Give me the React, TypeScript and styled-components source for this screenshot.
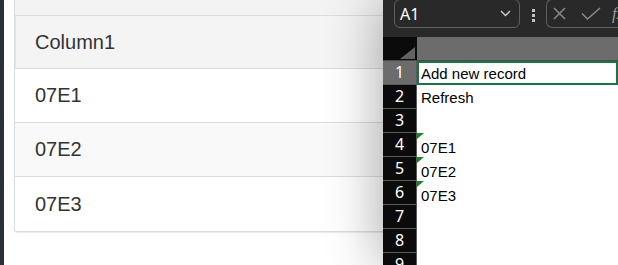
import * as React from "react";
import styled, { createGlobalStyle } from "styled-components";

const GlobalStyle = createGlobalStyle`
  body {
    margin: 0;
    overflow: hidden;
    background: #fff;
  }
`;

const tableRows = ["07E1", "07E2", "07E3"];

const sheetRows: { value: string; flagged?: boolean }[] = [
  { value: "Add new record" },
  { value: "Refresh" },
  { value: "" },
  { value: "07E1", flagged: true },
  { value: "07E2", flagged: true },
  { value: "07E3", flagged: true },
  { value: "" },
  { value: "" },
  { value: "" },
];

const Screen = styled.div`
  display: flex;
  width: 618px;
  height: 265px;
  overflow: hidden;
  background: #fff;
`;

const SideStrip = styled.div`
  width: 4px;
  flex-shrink: 0;
  background: #2a2e35;
`;

const BrowserArea = styled.main`
  flex: 1;
  min-width: 0;
  padding-left: 10px;
  overflow: hidden;
`;

const Card = styled.section`
  border: 1px solid #dcdcdc;
  border-top: none;
  border-right: none;
  border-radius: 0 0 0 3px;
  box-shadow: 0 1px 1px rgba(0, 0, 0, 0.08);
  overflow: hidden;
`;

const CardTop = styled.div`
  height: 15px;
  background: #f3f3f3;
  border-bottom: 1px solid #dcdcdc;
`;

const TableRow = styled.div<{ $variant: "head" | "odd" | "even"; $last?: boolean }>`
  display: flex;
  align-items: center;
  box-sizing: border-box;
  height: ${(p) => (p.$variant === "head" ? 53 : 54)}px;
  padding-left: ${(p) => (p.$variant === "head" ? 19 : 20)}px;
  border-bottom: ${(p) => (p.$last ? "none" : "1px solid #dcdcdc")};
  border-left: ${(p) => (p.$variant === "head" ? "1px solid #e4e4e4" : "none")};
  background: ${(p) =>
    p.$variant === "head" ? "#f4f4f4" : p.$variant === "even" ? "#f9f9f9" : "#fff"};
  font-family: "Liberation Sans", Arial, sans-serif;
  font-size: 20px;
  color: #333;
`;

const ExcelPane = styled.aside`
  position: relative;
  z-index: 1;
  width: 235px;
  flex-shrink: 0;
  background: #292929;
  box-shadow: -4px 0 50px rgba(0, 0, 0, 0.32);
  display: flex;
  flex-direction: column;
  overflow: hidden;
`;

const Toolbar = styled.div`
  display: flex;
  align-items: flex-start;
  flex-shrink: 0;
  height: 37px;
  padding-left: 11px;
`;

const NameBox = styled.div`
  box-sizing: border-box;
  width: 126px;
  flex-shrink: 0;
  height: 29px;
  margin-top: -1px;
  border: 1px solid #5e5e5e;
  border-radius: 6px;
  display: flex;
  align-items: center;
  justify-content: space-between;
  padding: 0 8px 0 5px;
  color: #fff;
  font-family: "Noto Sans", sans-serif;
  font-size: 16px;
`;

const Dots = styled.div`
  display: flex;
  flex-direction: column;
  flex-shrink: 0;
  gap: 2px;
  margin: 9px 0 0 12px;

  span {
    display: block;
    width: 3px;
    height: 3px;
    background: #c4c4c4;
  }
`;

const FormulaBox = styled.div`
  box-sizing: border-box;
  flex: 1;
  min-width: 0;
  height: 29px;
  margin: -1px 0 0 11px;
  border: 1px solid #5e5e5e;
  border-right: none;
  border-radius: 6px 0 0 6px;
  display: flex;
  align-items: center;
  padding-left: 6px;
  overflow: hidden;

  svg {
    flex-shrink: 0;
  }
`;

const IconGap = styled.span<{ $size: number }>`
  flex-shrink: 0;
  width: ${(p) => p.$size}px;
`;

const FxLabel = styled.span`
  flex-shrink: 0;
  color: #9a9a9a;
  font-family: "Liberation Serif", serif;
  font-style: italic;
  font-size: 17px;
`;

const Grid = styled.div`
  display: flex;
  flex-direction: column;
`;

const GridRow = styled.div`
  display: flex;
  height: 24px;
  flex-shrink: 0;
`;

const Corner = styled.div`
  box-sizing: border-box;
  width: 34px;
  background: #0b0b0b;
  border-bottom: 1px solid #4a4a4a;
  display: flex;
  align-items: flex-end;
  justify-content: flex-end;
  padding: 0 2px 1px 0;
`;

const ColHeader = styled.div`
  flex: 1;
  background: #6c6c6c;
  border-bottom: 1px solid #4a4a4a;
`;

const RowHeader = styled.div<{ $active?: boolean }>`
  box-sizing: border-box;
  width: 34px;
  flex-shrink: 0;
  background: ${(p) => (p.$active ? "#6c6c6c" : "#0b0b0b")};
  border-bottom: 1px solid #5a5a5a;
  border-right: 1px solid #5a5a5a;
  color: #fff;
  font-family: "Noto Sans", sans-serif;
  font-size: 16px;
  line-height: 23px;
  text-align: center;
`;

const Cell = styled.div<{ $selected?: boolean; $flagged?: boolean }>`
  position: relative;
  flex: 1;
  box-sizing: border-box;
  display: flex;
  align-items: center;
  padding: ${(p) => (p.$flagged ? "4px" : "1px")} 0 0 4px;
  background: #fff;
  box-shadow: ${(p) => (p.$selected ? "inset 0 0 0 2px #1e7145" : "none")};
  color: #000;
  font-family: "Liberation Sans", Arial, sans-serif;
  font-size: 15px;
  white-space: nowrap;

  &::before {
    content: "";
    display: ${(p) => (p.$flagged ? "block" : "none")};
    position: absolute;
    top: 0;
    left: 0;
    border-style: solid;
    border-width: 6px 7px 0 0;
    border-color: #178a1c transparent transparent transparent;
  }
`;

const Chevron = () => (
  <svg width="11" height="7" viewBox="0 0 11 7" fill="none">
    <path d="M1 1l4.5 4.5L10 1" stroke="#cfcfcf" strokeWidth="1.4" />
  </svg>
);

const CrossIcon = () => (
  <svg width="13" height="13" viewBox="0 0 13 13" fill="none">
    <path d="M1 1l11 11M12 1L1 12" stroke="#8a8a8a" strokeWidth="1.5" />
  </svg>
);

const CheckIcon = () => (
  <svg width="20" height="13" viewBox="0 0 20 13" fill="none">
    <path d="M1 6.5l5.5 5.5L19 1" stroke="#8a8a8a" strokeWidth="1.5" />
  </svg>
);

const CornerTriangle = () => (
  <svg width="15" height="12" viewBox="0 0 15 12">
    <polygon points="15,0 15,12 0,12" fill="#626262" />
  </svg>
);

const App = () => {
  return (
    <>
      <GlobalStyle />
      <Screen>
        <SideStrip />
        <BrowserArea>
          <Card>
            <CardTop />
            <TableRow $variant="head">Column1</TableRow>
            {tableRows.map((row, i) => (
              <TableRow
                key={row}
                $variant={i % 2 === 0 ? "odd" : "even"}
                $last={i === tableRows.length - 1}
              >
                {row}
              </TableRow>
            ))}
          </Card>
        </BrowserArea>
        <ExcelPane>
          <Toolbar>
            <NameBox>
              <span>A1</span>
              <Chevron />
            </NameBox>
            <Dots>
              <span />
              <span />
              <span />
            </Dots>
            <FormulaBox>
              <CrossIcon />
              <IconGap $size={15} />
              <CheckIcon />
              <IconGap $size={11} />
              <FxLabel>fx</FxLabel>
            </FormulaBox>
          </Toolbar>
          <Grid>
            <GridRow>
              <Corner>
                <CornerTriangle />
              </Corner>
              <ColHeader />
            </GridRow>
            {sheetRows.map((row, i) => (
              <GridRow key={i}>
                <RowHeader $active={i === 0}>{i + 1}</RowHeader>
                <Cell $selected={i === 0} $flagged={row.flagged}>
                  {row.value}
                </Cell>
              </GridRow>
            ))}
          </Grid>
        </ExcelPane>
      </Screen>
    </>
  );
};

export default App;
